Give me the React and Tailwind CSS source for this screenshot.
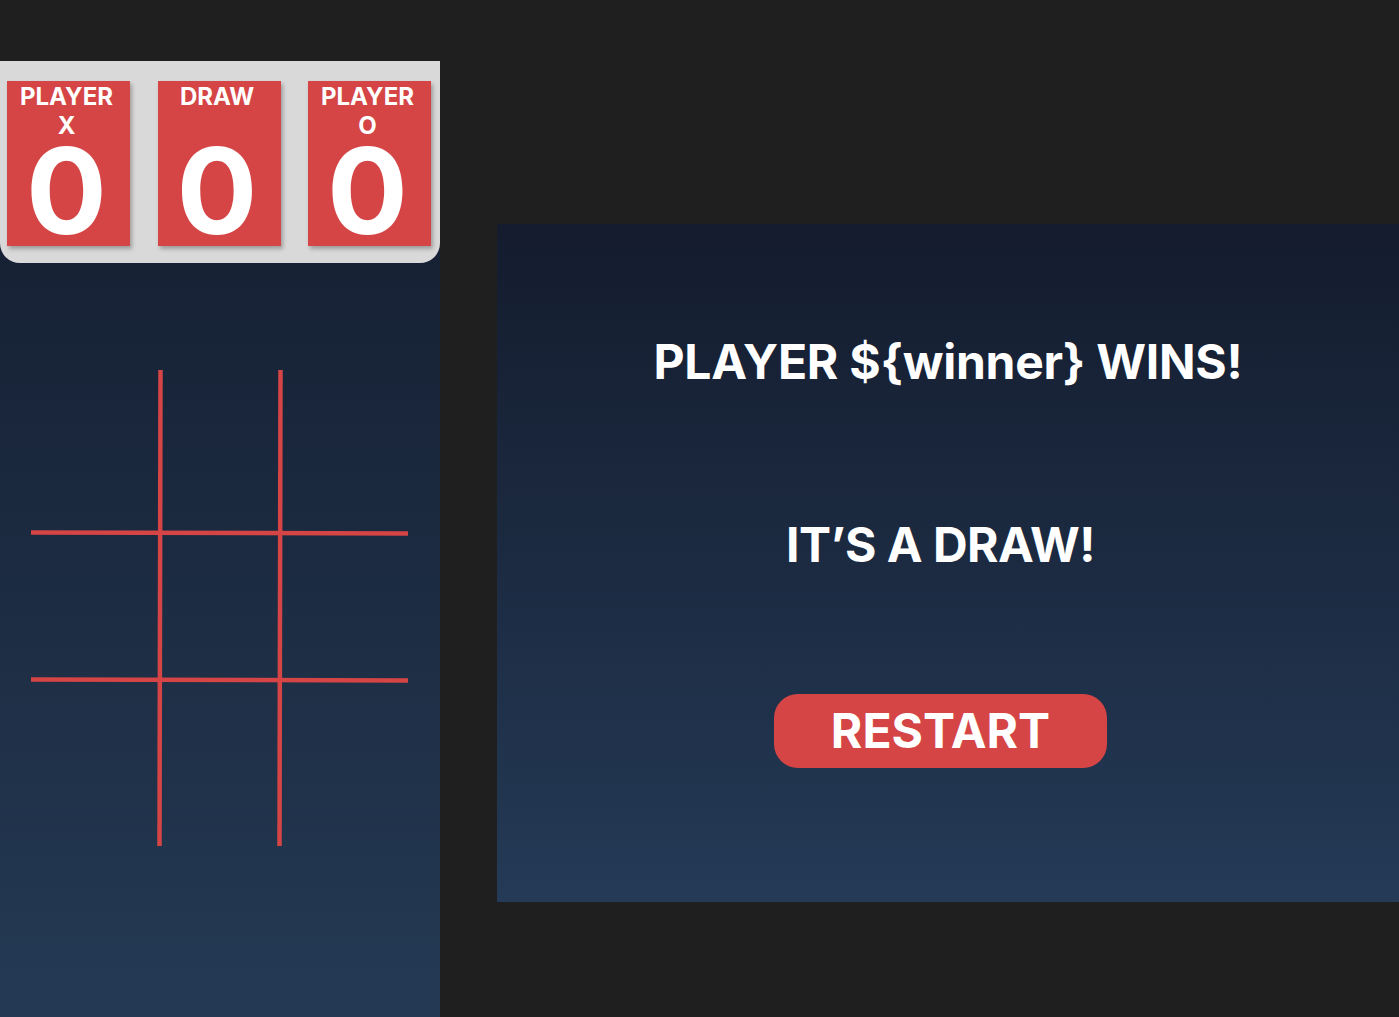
import React from "react";

const RED = "#d54545";

function ScoreCard({ label, sub, score }) {
    return (
        <div className="w-[123px] h-[165px] pr-[4px] bg-[#d54545] shadow-[2px_3px_4px_rgba(0,0,0,0.28)] flex flex-col items-center text-white font-bold">
            <div className="h-[60px] flex flex-col items-center text-[24px] leading-[29px] pt-[1px]">
                <span>{label}</span>
                {sub && <span>{sub}</span>}
            </div>
            <div className="text-[120px] leading-[100px]">{score}</div>
        </div>
    );
}

function Board() {
    // hand-drawn looking lines, coordinates relative to the board area
    return (
        <svg width="440" height="600" viewBox="0 0 440 600" className="block">
            <line x1="160.5" y1="107" x2="159.5" y2="583" stroke={RED} strokeWidth="4.5" />
            <line x1="280.5" y1="107" x2="279.5" y2="583" stroke={RED} strokeWidth="4.5" />
            <line x1="31" y1="269.5" x2="408" y2="270.5" stroke={RED} strokeWidth="4.5" />
            <line x1="31" y1="416.5" x2="408" y2="417.5" stroke={RED} strokeWidth="4.5" />
        </svg>
    );
}

export default function App() {
    return (
        <div className="h-[1017px] overflow-hidden bg-[#1f1f1f] flex items-start font-['Inter','Liberation_Sans',sans-serif]">
            <div className="mt-[61px] w-[440px] h-[956px] bg-gradient-to-b from-[#131b2d] to-[#243a54] flex flex-col">
                <div className="h-[202px] bg-[#d9d9d9] rounded-b-[20px] flex justify-between pl-[7px] pr-[9px] pt-[20px]">
                    <ScoreCard label="PLAYER" sub="X" score="0" />
                    <ScoreCard label="DRAW" score="0" />
                    <ScoreCard label="PLAYER" sub="O" score="0" />
                </div>
                <Board />
            </div>

            <div className="ml-[57px] mt-[224px] w-[902px] h-[678px] bg-gradient-to-b from-[#141c2e] to-[#243a56] flex flex-col items-center text-white font-bold">
                <h2 className="mt-[109px] text-[48px] leading-[58px] tracking-[-0.25px]">{"PLAYER ${winner} WINS!"}</h2>
                <h2 className="mt-[125px] mr-[15px] text-[48px] leading-[58px] tracking-[-0.5px]">IT’S A DRAW!</h2>
                <button className="mt-[120px] mr-[15px] w-[333px] h-[74px] rounded-[24px] bg-[#d54545] text-[48px] leading-none flex items-center justify-center">
                    RESTART
                </button>
            </div>
        </div>
    );
}
